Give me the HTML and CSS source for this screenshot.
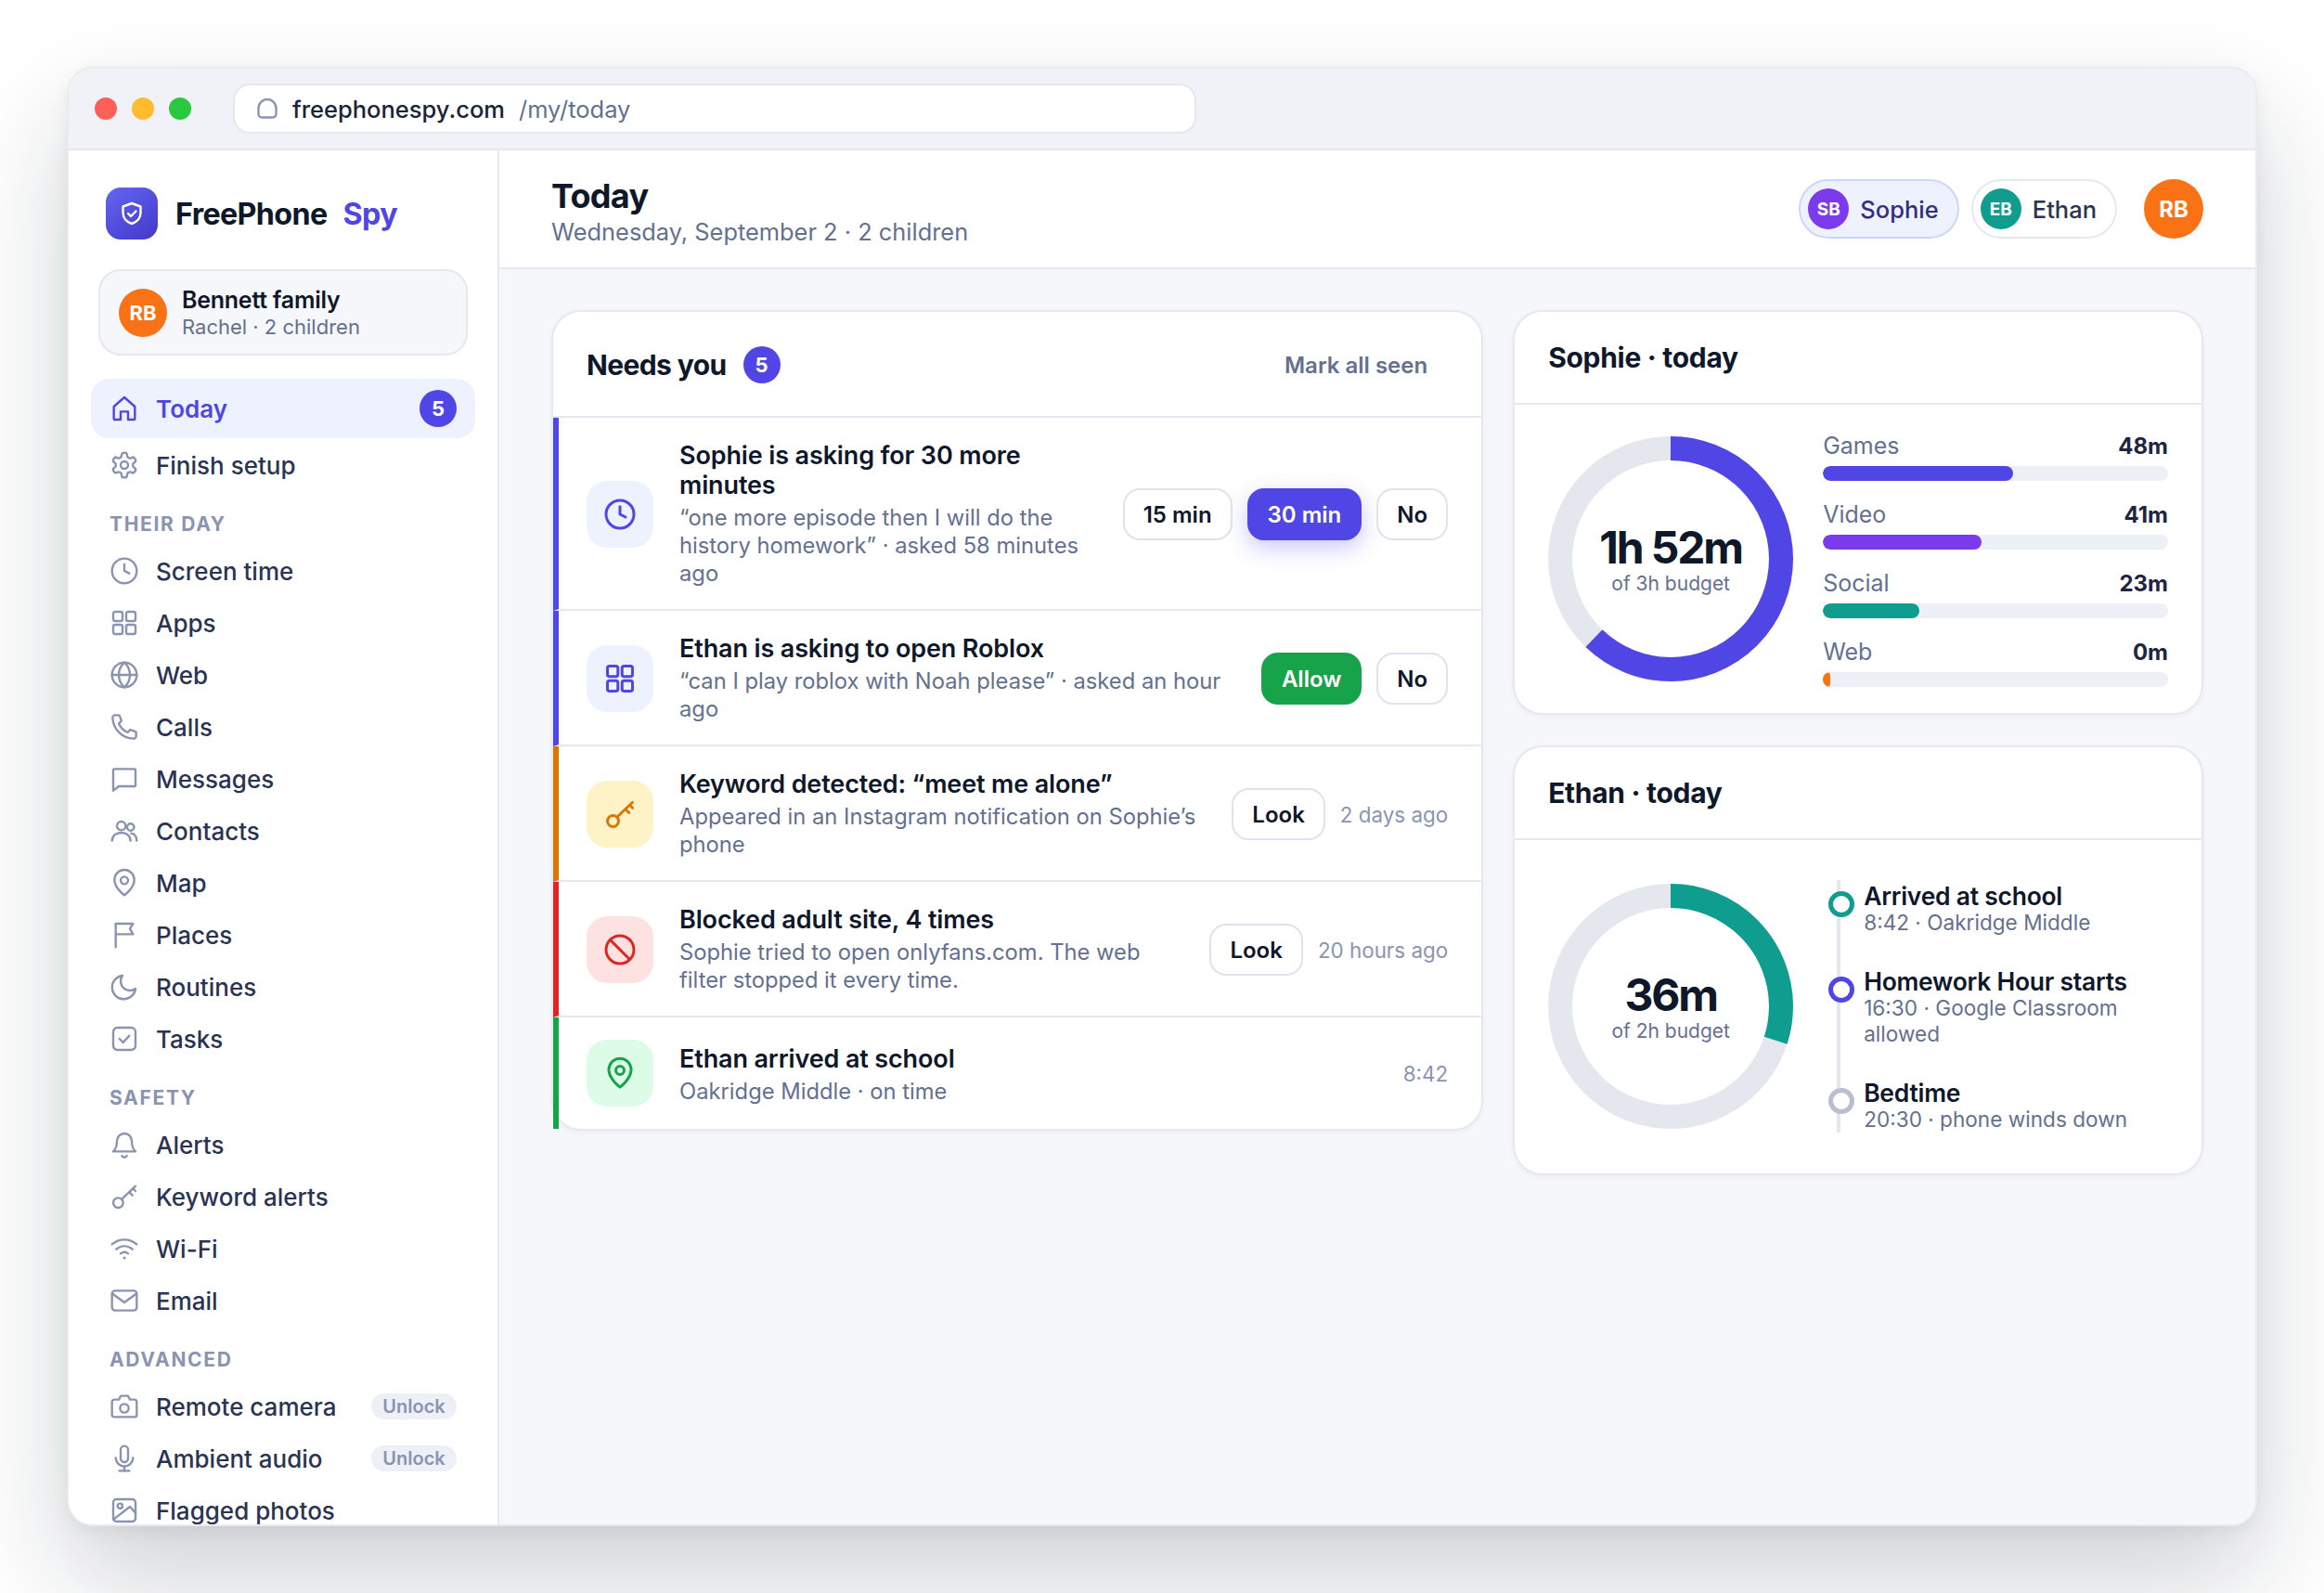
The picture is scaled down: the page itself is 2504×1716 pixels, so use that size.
FILE: index.html
```html
<!DOCTYPE html>
<html lang="en">
<head>
<meta charset="utf-8">
<title>FreePhone Spy</title>
<link rel="stylesheet" href="styles.css">
</head>
<body>
<svg class="sprite" xmlns="http://www.w3.org/2000/svg">
  <symbol id="i-home" viewBox="0 0 24 24"><path d="M3.500 10.500 12 3l8.500 7.500V20a1 1 0 0 1-1 1H15v-6.500H9V21H4.500a1 1 0 0 1-1-1z"/></symbol>
  <symbol id="i-gear" viewBox="0 0 24 24"><path d="M12.220 2h-.44a2 2 0 0 0-2 2v.18a2 2 0 0 1-1 1.730l-.43.25a2 2 0 0 1-2 0l-.15-.08a2 2 0 0 0-2.730.73l-.22.38a2 2 0 0 0 .73 2.730l.15.1a2 2 0 0 1 1 1.720v.51a2 2 0 0 1-1 1.740l-.15.09a2 2 0 0 0-.73 2.730l.22.38a2 2 0 0 0 2.730.73l.15-.08a2 2 0 0 1 2 0l.43.25a2 2 0 0 1 1 1.730V20a2 2 0 0 0 2 2h.44a2 2 0 0 0 2-2v-.18a2 2 0 0 1 1-1.730l.43-.25a2 2 0 0 1 2 0l.15.08a2 2 0 0 0 2.730-.73l.22-.39a2 2 0 0 0-.73-2.730l-.15-.08a2 2 0 0 1-1-1.740v-.5a2 2 0 0 1 1-1.740l.15-.09a2 2 0 0 0 .73-2.730l-.22-.38a2 2 0 0 0-2.730-.73l-.15.08a2 2 0 0 1-2 0l-.43-.25a2 2 0 0 1-1-1.730V4a2 2 0 0 0-2-2z"/><circle cx="12" cy="12" r="3"/></symbol>
  <symbol id="i-clock" viewBox="0 0 24 24"><circle cx="12" cy="12" r="10"/><path d="M12 6.500V12l4 2"/></symbol>
  <symbol id="i-apps" viewBox="0 0 24 24"><rect x="3" y="3" width="7.500" height="7.500" rx="1.500"/><rect x="13.500" y="3" width="7.500" height="7.500" rx="1.500"/><rect x="3" y="13.500" width="7.500" height="7.500" rx="1.500"/><rect x="13.500" y="13.500" width="7.500" height="7.500" rx="1.500"/></symbol>
  <symbol id="i-globe" viewBox="0 0 24 24"><circle cx="12" cy="12" r="10"/><path d="M2 12h20"/><path d="M12 2c3 2.700 4.500 6 4.500 10s-1.500 7.300-4.500 10c-3-2.700-4.500-6-4.500-10S9 4.700 12 2z"/></symbol>
  <symbol id="i-phone" viewBox="0 0 24 24"><path d="M4.500 2.500h2.800a1 1 0 0 1 1 .7l1.200 3.500a1 1 0 0 1-.3 1.100L7.500 9.300a14 14 0 0 0 7.200 7.200l1.500-1.700a1 1 0 0 1 1.100-.3l3.500 1.200a1 1 0 0 1 .7 1v2.800a2 2 0 0 1-2.200 2A17.500 17.500 0 0 1 2.500 4.700a2 2 0 0 1 2-2.200z"/></symbol>
  <symbol id="i-chat" viewBox="0 0 24 24"><path d="M3 5a1 1 0 0 1 1-1h16a1 1 0 0 1 1 1v12a1 1 0 0 1-1 1H7.500L3 21.500z"/></symbol>
  <symbol id="i-users" viewBox="0 0 24 24"><circle cx="9.500" cy="8" r="3.500"/><circle cx="17" cy="9" r="2.800"/><path d="M2 20c.3-4.200 3.300-6.500 7.500-6.500S16.700 15.800 17 20"/><path d="M17.500 14c2.600.3 4.300 2.500 4.500 6"/></symbol>
  <symbol id="i-pin" viewBox="0 0 24 24"><path d="M12 22s-8-5.800-8-12.500a8 8 0 0 1 16 0C20 16.200 12 22 12 22z"/><circle cx="12" cy="10" r="3"/></symbol>
  <symbol id="i-flag" viewBox="0 0 24 24"><path d="M5 22V3h14l-2.500 4 2.500 4.500H5"/></symbol>
  <symbol id="i-moon" viewBox="0 0 24 24"><path d="M21 13.500A9.500 9.500 0 1 1 10.500 3 7.500 7.500 0 0 0 21 13.500z"/></symbol>
  <symbol id="i-check" viewBox="0 0 24 24"><rect x="3" y="3" width="18" height="18" rx="3.500"/><path d="m8 12 3 3 5-5.500"/></symbol>
  <symbol id="i-bell" viewBox="0 0 24 24"><path d="M6 9a6 6 0 0 1 12 0c0 5.500 1.500 7 3 8.500H3C4.500 16 6 14.500 6 9z"/><path d="M10 21a2.200 2.200 0 0 0 4 0"/></symbol>
  <symbol id="i-key" viewBox="0 0 24 24"><circle cx="7" cy="17" r="4"/><path d="M10 14 21 3.500"/><path d="m16 8.500 2.500 2.500"/><path d="m19 5.500 2 2"/></symbol>
  <symbol id="i-wifi" viewBox="0 0 24 24"><path d="M2 8.500c6-5 14-5 20 0"/><path d="M5.500 12.500c4-3.300 9-3.300 13 0"/><path d="M9 16c1.800-1.400 4.200-1.400 6 0"/><circle class="solid" cx="12" cy="19.500" r="1.200"/></symbol>
  <symbol id="i-mail" viewBox="0 0 24 24"><rect x="2" y="4" width="20" height="16" rx="2.500"/><path d="m2.500 6.500 9.500 7 9.500-7"/></symbol>
  <symbol id="i-camera" viewBox="0 0 24 24"><path d="M4 6.500h3.500L9 3.500h6l1.500 3H20a2 2 0 0 1 2 2V19a1.500 1.500 0 0 1-1.500 1.500h-17A1.500 1.500 0 0 1 2 19V8.500a2 2 0 0 1 2-2z"/><circle cx="12" cy="13.500" r="3.500"/></symbol>
  <symbol id="i-mic" viewBox="0 0 24 24"><rect x="9" y="2" width="6" height="13" rx="3"/><path d="M5 11.500a7 7 0 0 0 14 0"/><path d="M12 18.500V22"/><path d="M8 22h8"/></symbol>
  <symbol id="i-photo" viewBox="0 0 24 24"><rect x="3" y="3" width="18" height="18" rx="2.500"/><circle cx="8.500" cy="8.500" r="2"/><path d="m3.500 19 13-10 4.500 5"/></symbol>
  <symbol id="i-block" viewBox="0 0 24 24"><circle cx="12" cy="12" r="10"/><path d="m5 5 14 14"/></symbol>
</svg>

<div class="window">
  <header class="titlebar">
    <span class="dot dot-red"></span><span class="dot dot-yellow"></span><span class="dot dot-green"></span>
    <div class="urlbar">
      <svg class="url-glyph" viewBox="0 0 22 22"><path d="M1.500 10.500a9.500 9.500 0 0 1 19 0V17a3.500 3.500 0 0 1-3.500 3.500H5A3.500 3.500 0 0 1 1.500 17z"/></svg>
      <span class="url-host">freephonespy.com</span>
      <span class="url-path">/my/today</span>
    </div>
  </header>
  <div class="app">
    <aside class="sidebar">
      <div class="brand">
        <span class="brand-mark">
          <svg viewBox="0 0 24 26"><path d="M12 2 21.500 5.500V12c0 6-4 10-9.500 12C6.500 22 2.500 18 2.500 12V5.500z"/><path d="m8 13 3 3 5.500-5.500"/></svg>
        </span>
        <span class="brand-name">FreePhone</span><span class="brand-accent">Spy</span>
      </div>
      <div class="family">
        <span class="avatar avatar-orange avatar-52">RB</span>
        <div>
          <div class="family-name">Bennett family</div>
          <div class="family-sub">Rachel · 2 children</div>
        </div>
      </div>
      <nav class="nav">
        <a class="nav-item nav-active"><svg class="ico"><use href="#i-home"/></svg><span class="nav-text">Today</span><span class="count">5</span></a>
        <a class="nav-item"><svg class="ico"><use href="#i-gear"/></svg><span class="nav-text">Finish setup</span></a>
        <div class="nav-label">THEIR DAY</div>
        <a class="nav-item"><svg class="ico"><use href="#i-clock"/></svg><span class="nav-text">Screen time</span></a>
        <a class="nav-item"><svg class="ico"><use href="#i-apps"/></svg><span class="nav-text">Apps</span></a>
        <a class="nav-item"><svg class="ico"><use href="#i-globe"/></svg><span class="nav-text">Web</span></a>
        <a class="nav-item"><svg class="ico"><use href="#i-phone"/></svg><span class="nav-text">Calls</span></a>
        <a class="nav-item"><svg class="ico"><use href="#i-chat"/></svg><span class="nav-text">Messages</span></a>
        <a class="nav-item"><svg class="ico"><use href="#i-users"/></svg><span class="nav-text">Contacts</span></a>
        <a class="nav-item"><svg class="ico"><use href="#i-pin"/></svg><span class="nav-text">Map</span></a>
        <a class="nav-item"><svg class="ico"><use href="#i-flag"/></svg><span class="nav-text">Places</span></a>
        <a class="nav-item"><svg class="ico"><use href="#i-moon"/></svg><span class="nav-text">Routines</span></a>
        <a class="nav-item"><svg class="ico"><use href="#i-check"/></svg><span class="nav-text">Tasks</span></a>
        <div class="nav-label">SAFETY</div>
        <a class="nav-item"><svg class="ico"><use href="#i-bell"/></svg><span class="nav-text">Alerts</span></a>
        <a class="nav-item"><svg class="ico"><use href="#i-key"/></svg><span class="nav-text">Keyword alerts</span></a>
        <a class="nav-item"><svg class="ico"><use href="#i-wifi"/></svg><span class="nav-text">Wi-Fi</span></a>
        <a class="nav-item"><svg class="ico"><use href="#i-mail"/></svg><span class="nav-text">Email</span></a>
        <div class="nav-label">ADVANCED</div>
        <a class="nav-item"><svg class="ico"><use href="#i-camera"/></svg><span class="nav-text">Remote camera</span><span class="unlock">Unlock</span></a>
        <a class="nav-item"><svg class="ico"><use href="#i-mic"/></svg><span class="nav-text">Ambient audio</span><span class="unlock">Unlock</span></a>
        <a class="nav-item"><svg class="ico"><use href="#i-photo"/></svg><span class="nav-text">Flagged photos</span></a>
      </nav>
    </aside>
    <main class="main">
      <header class="topbar">
        <div>
          <h1 class="page-title">Today</h1>
          <div class="page-sub">Wednesday, September 2 · 2 children</div>
        </div>
        <div class="topbar-right">
          <span class="child child-on"><span class="avatar avatar-violet avatar-44">SB</span>Sophie</span>
          <span class="child"><span class="avatar avatar-teal avatar-44">EB</span>Ethan</span>
          <span class="avatar avatar-orange avatar-64">RB</span>
        </div>
      </header>
      <div class="content">
        <section class="card">
          <div class="needs-head">
            <h2 class="card-title">Needs you</h2>
            <span class="count count-lg">5</span>
            <span class="mark">Mark all seen</span>
          </div>
          <div class="row row-indigo">
            <span class="tile tile-indigo"><svg class="tile-ico"><use href="#i-clock"/></svg></span>
            <div class="row-text">
              <div class="row-title">Sophie is asking for 30 more minutes</div>
              <div class="row-sub">“one more episode then I will do the history homework” · asked 58 minutes ago</div>
            </div>
            <div class="actions">
              <span class="btn">15 min</span><span class="btn btn-primary">30 min</span><span class="btn">No</span>
            </div>
          </div>
          <div class="row row-indigo">
            <span class="tile tile-indigo"><svg class="tile-ico"><use href="#i-apps"/></svg></span>
            <div class="row-text">
              <div class="row-title">Ethan is asking to open Roblox</div>
              <div class="row-sub">“can I play roblox with Noah please” · asked an hour ago</div>
            </div>
            <div class="actions">
              <span class="btn btn-green">Allow</span><span class="btn">No</span>
            </div>
          </div>
          <div class="row row-amber">
            <span class="tile tile-amber"><svg class="tile-ico"><use href="#i-key"/></svg></span>
            <div class="row-text">
              <div class="row-title">Keyword detected: “meet me alone”</div>
              <div class="row-sub">Appeared in an Instagram notification on Sophie’s phone</div>
            </div>
            <div class="actions">
              <span class="btn">Look</span><span class="time">2 days ago</span>
            </div>
          </div>
          <div class="row row-red">
            <span class="tile tile-red"><svg class="tile-ico"><use href="#i-block"/></svg></span>
            <div class="row-text">
              <div class="row-title">Blocked adult site, 4 times</div>
              <div class="row-sub">Sophie tried to open onlyfans.com. The web filter stopped it every time.</div>
            </div>
            <div class="actions">
              <span class="btn">Look</span><span class="time">20 hours ago</span>
            </div>
          </div>
          <div class="row row-green row-last">
            <span class="tile tile-green"><svg class="tile-ico"><use href="#i-pin"/></svg></span>
            <div class="row-text">
              <div class="row-title">Ethan arrived at school</div>
              <div class="row-sub">Oakridge Middle · on time</div>
            </div>
            <span class="time">8:42</span>
          </div>
        </section>
        <div class="side">
          <section class="card">
            <h2 class="side-head">Sophie · today</h2>
            <div class="side-body side-body-bars">
              <div class="donut">
                <svg viewBox="0 0 264 264"><circle class="ring-track" cx="132" cy="132" r="119"/><circle class="ring-indigo" cx="132" cy="132" r="119" pathLength="100" stroke-dasharray="62.2 100"/></svg>
                <div class="donut-text"><div class="donut-val">1h 52m</div><div class="donut-sub">of 3h budget</div></div>
              </div>
              <div class="bars">
                <div class="bar"><div class="bar-top"><span class="bar-name">Games</span><span class="bar-val">48m</span></div><div class="track"><div class="fill fill-indigo" style="width:55%"></div></div></div>
                <div class="bar"><div class="bar-top"><span class="bar-name">Video</span><span class="bar-val">41m</span></div><div class="track"><div class="fill fill-violet" style="width:46%"></div></div></div>
                <div class="bar"><div class="bar-top"><span class="bar-name">Social</span><span class="bar-val">23m</span></div><div class="track"><div class="fill fill-teal" style="width:28%"></div></div></div>
                <div class="bar"><div class="bar-top"><span class="bar-name">Web</span><span class="bar-val">0m</span></div><div class="track"><div class="fill fill-orange" style="width:2%"></div></div></div>
              </div>
            </div>
          </section>
          <section class="card">
            <h2 class="side-head">Ethan · today</h2>
            <div class="side-body side-body-tall">
              <div class="donut">
                <svg viewBox="0 0 264 264"><circle class="ring-track" cx="132" cy="132" r="119"/><circle class="ring-teal" cx="132" cy="132" r="119" pathLength="100" stroke-dasharray="30 100"/></svg>
                <div class="donut-text"><div class="donut-val">36m</div><div class="donut-sub">of 2h budget</div></div>
              </div>
              <div class="timeline">
                <div class="tl-item"><span class="tl-dot tl-teal"></span><div class="tl-title">Arrived at school</div><div class="tl-sub">8:42 · Oakridge Middle</div></div>
                <div class="tl-item"><span class="tl-dot tl-indigo"></span><div class="tl-title">Homework Hour starts</div><div class="tl-sub">16:30 · Google Classroom allowed</div></div>
                <div class="tl-item"><span class="tl-dot tl-grey"></span><div class="tl-title">Bedtime</div><div class="tl-sub">20:30 · phone winds down</div></div>
              </div>
            </div>
          </section>
        </div>
      </div>
    </main>
  </div>
</div>
</body>
</html>
```
FILE: styles.css
```css
* { box-sizing: border-box; }
html, body { margin: 0; height: 100%; }
body {
  background: #fff;
  font-family: Inter, "Liberation Sans", sans-serif;
  color: #0f172a;
  padding: 72px;
  height: 1716px;
  overflow: hidden;
}
h1, h2 { margin: 0; }
.sprite { width: 0; height: 0; position: absolute; }

.window {
  width: 2360px;
  height: 1572px;
  display: flex;
  flex-direction: column;
  background: #fff;
  border: 2px solid #e9ebf1;
  border-radius: 28px;
  overflow: hidden;
  box-shadow: 0 56px 120px rgba(15, 23, 42, .2), 0 6px 20px rgba(15, 23, 42, .06);
}
.titlebar {
  height: 88px;
  flex: none;
  display: flex;
  align-items: center;
  gap: 16px;
  padding: 0 28px;
  background: #f1f2f7;
  border-bottom: 2px solid #e6e8f0;
}
.dot { width: 24px; height: 24px; border-radius: 50%; }
.dot-red { background: #ff5f57; }
.dot-yellow { background: #febc2e; }
.dot-green { background: #28c840; }
.urlbar {
  width: 1038px;
  height: 54px;
  margin-left: 29px;
  display: flex;
  align-items: center;
  padding: 0 24px;
  background: #fff;
  border: 2px solid #e6e8f0;
  border-radius: 18px;
  font-size: 25.5px;
  font-weight: 500;
}
.url-glyph { width: 22px; height: 22px; margin-right: 16px; fill: none; stroke: #8a94b0; stroke-width: 2.4; }
.url-host { color: #1b2338; }
.url-path { margin-left: 15px; color: #64708f; font-weight: 400; }

.app { flex: 1; min-height: 0; display: flex; }
.sidebar {
  width: 464px;
  flex: none;
  padding: 40px 24px 0;
  border-right: 2px solid #e6e8f0;
  overflow: hidden;
}
.brand { display: flex; align-items: center; margin-left: 16px; height: 56px; }
.brand-mark {
  width: 56px; height: 56px;
  margin-right: 19px;
  border-radius: 16px;
  background: linear-gradient(145deg, #6366f1, #4338ca);
  display: flex; align-items: center; justify-content: center;
}
.brand-mark svg { width: 24px; height: 26px; fill: none; stroke: #fff; stroke-width: 2.4; stroke-linejoin: round; stroke-linecap: round; }
.brand-name { font-size: 32.3px; font-weight: 700; letter-spacing: -.02em; }
.brand-accent { font-size: 32.3px; font-weight: 700; letter-spacing: -.02em; color: #4f46e5; margin-left: 17px; }

.avatar {
  flex: none;
  border-radius: 50%;
  color: #fff;
  display: inline-flex; align-items: center; justify-content: center;
  font-weight: 700;
}
.avatar-52 { width: 52px; height: 52px; font-size: 22px; }
.avatar-44 { width: 44px; height: 44px; font-size: 19px; }
.avatar-64 { width: 64px; height: 64px; font-size: 24px; }
.avatar-orange { background: #f97316; }
.avatar-violet { background: #7c3aed; }
.avatar-teal { background: #0f9d90; }

.family {
  margin: 32px 8px 25px;
  height: 93px;
  display: flex;
  align-items: center;
  gap: 16px;
  padding: 0 20px;
  background: #f6f7fb;
  border: 2px solid #e6e8f0;
  border-radius: 24px;
}
.family-name { font-size: 25px; font-weight: 600; line-height: 30px; letter-spacing: -.01em; }
.family-sub { font-size: 22px; line-height: 28px; color: #64708f; }

.nav { display: flex; flex-direction: column; }
.nav-item {
  height: 56px;
  flex: none;
  display: flex;
  align-items: center;
  gap: 18px;
  padding: 0 20px;
  font-size: 26px;
  font-weight: 500;
  color: #2a3352;
  border-radius: 20px;
}
.nav-active {
  height: 64px;
  margin-bottom: 1px;
  color: #4f46e5;
  font-weight: 600;
  background: #eef2ff;
}
.nav-active .ico { color: #4f46e5; }
.nav-text { flex: 1; }
.ico {
  width: 32px; height: 32px;
  flex: none;
  color: #8a94b0;
  fill: none;
  stroke: currentColor;
  stroke-width: 1.8;
  stroke-linecap: round;
  stroke-linejoin: round;
}
.solid { fill: currentColor; stroke: none; }
.count {
  width: 40px; height: 40px;
  border-radius: 50%;
  background: #4f46e5;
  color: #fff;
  font-size: 22px;
  font-weight: 700;
  display: inline-flex; align-items: center; justify-content: center;
}
.count-lg { margin-left: 18px; }
.nav-label {
  margin: 22px 0 8px;
  padding-left: 20px;
  font-size: 21px;
  line-height: 28px;
  font-weight: 700;
  letter-spacing: .08em;
  color: #8a94b0;
}
.unlock {
  width: 92px; height: 28px;
  border-radius: 14px;
  background: #eef0f7;
  color: #8a94b0;
  font-size: 20px;
  font-weight: 600;
  display: flex; align-items: center; justify-content: center;
}

.main { flex: 1; min-width: 0; background: #f6f7fb; display: flex; flex-direction: column; }
.topbar {
  height: 128px;
  flex: none;
  display: flex;
  align-items: center;
  justify-content: space-between;
  padding: 0 56px;
  background: #fff;
  border-bottom: 2px solid #e6e8f0;
}
.page-title { font-size: 36px; line-height: 42px; font-weight: 700; letter-spacing: -.02em; margin-top: 6px; }
.page-sub { font-size: 25.4px; line-height: 32px; margin-top: 2px; color: #64708f; }
.topbar-right { display: flex; align-items: center; gap: 13px; }
.child {
  height: 64px;
  display: inline-flex;
  align-items: center;
  gap: 12px;
  padding: 0 20px 0 8px;
  border: 2px solid #e6e8f0;
  border-radius: 32px;
  background: #fff;
  font-size: 25.5px;
  font-weight: 500;
  color: #2a3352;
}
.child-on { background: #eef2ff; border-color: #cdd5fb; color: #312e81; }
.topbar-right .avatar-64 { margin-left: 16px; }

.content {
  flex: 1;
  display: grid;
  grid-template-columns: 1.35fr 1fr;
  gap: 32px;
  align-items: start;
  padding: 44px 56px 0;
}
.card {
  background: #fff;
  border: 2px solid #e6e8f0;
  border-radius: 32px;
  box-shadow: 0 2px 6px rgba(15, 23, 42, .04);
}
.side { display: flex; flex-direction: column; gap: 33px; }
.needs-head {
  height: 114px;
  display: flex;
  align-items: center;
  padding: 2px 36px 0;
  border-bottom: 2px solid #e6e8f0;
}
.card-title { font-size: 30px; font-weight: 700; letter-spacing: -.02em; }
.mark { margin-left: auto; margin-right: 22px; font-size: 24px; font-weight: 600; color: #64708f; }

.row {
  display: flex;
  align-items: center;
  gap: 28px;
  padding: 25px 36px 23px 30px;
  border-left: 6px solid;
  border-bottom: 2px solid #e6e8f0;
}
.row-last { border-bottom-width: 0; padding: 24px 36px 24px 30px; }
.row-last .row-text { padding-top: 4px; }
.row-indigo { border-left-color: #4f46e5; }
.row-amber { border-left-color: #d97706; }
.row-red { border-left-color: #dc2626; }
.row-green { border-left-color: #16a34a; }
.tile {
  width: 72px; height: 72px;
  flex: none;
  border-radius: 22px;
  display: flex; align-items: center; justify-content: center;
}
.tile-indigo { background: #eef2ff; color: #4f46e5; }
.tile-amber { background: #fef3c7; color: #d97706; }
.tile-red { background: #fee2e2; color: #dc2626; }
.tile-green { background: #dcfce7; color: #16a34a; }
.tile-ico {
  width: 36px; height: 36px;
  fill: none;
  stroke: currentColor;
  stroke-width: 2;
  stroke-linecap: round;
  stroke-linejoin: round;
}
.row-text { flex: 1; min-width: 0; }
.row-title { font-size: 27px; line-height: 32px; font-weight: 600; letter-spacing: -.005em; }
.row-sub { margin-top: 4px; font-size: 23.75px; line-height: 30px; color: #64708f; }
.actions { display: flex; align-items: center; gap: 16px; flex: none; }
.btn {
  height: 56px;
  padding: 0 20px;
  display: inline-flex; align-items: center;
  border: 2px solid #dfe3ef;
  border-radius: 18px;
  background: #fff;
  font-size: 24px;
  font-weight: 600;
  color: #0f172a;
}
.btn-primary { background: #4f46e5; border-color: #4f46e5; color: #fff; box-shadow: 0 8px 24px rgba(79, 70, 229, .3); }
.btn-green { background: #16a34a; border-color: #16a34a; color: #fff; }
.time { font-size: 22.4px; color: #8a94b0; white-space: nowrap; }

.side-head {
  height: 100px;
  padding: 0 36px;
  display: flex; align-items: center;
  font-size: 30px;
  font-weight: 700;
  letter-spacing: -.01em;
  border-bottom: 2px solid #e6e8f0;
}
.side-body { display: flex; align-items: center; gap: 32px; padding: 32px 36px; }
.side-body-bars { align-items: flex-start; padding: 33px 36px 28px; }
.side-body-bars .donut { margin-top: 1px; }
.side-body-tall { padding: 43px 36px 44px; }
.donut { width: 264px; height: 264px; flex: none; position: relative; }
.donut svg { width: 264px; height: 264px; display: block; transform: rotate(-90deg); fill: none; stroke-width: 26; }
.ring-track { stroke: #e5e7ef; }
.ring-indigo { stroke: #4f46e5; }
.ring-teal { stroke: #0f9d90; }
.donut-text { position: absolute; inset: 2px 0 0; display: flex; flex-direction: column; align-items: center; justify-content: center; }
.donut-val { font-size: 48px; line-height: 52px; font-weight: 700; letter-spacing: -.045em; }
.donut-sub { font-size: 21px; line-height: 26px; color: #64708f; }

.bars { flex: 1; display: flex; flex-direction: column; gap: 25px; }
.bar-top { display: flex; justify-content: space-between; align-items: center; height: 22px; margin-bottom: 11px; }
.bar-name { font-size: 25px; color: #64708f; }
.bar-val { font-size: 24px; font-weight: 700; color: #1e2540; }
.track { height: 16px; border-radius: 8px; background: #eef0f7; overflow: hidden; }
.fill { height: 100%; border-radius: 8px; }
.fill-indigo { background: #4f46e5; }
.fill-violet { background: #7c3aed; }
.fill-teal { background: #0f9d90; }
.fill-orange { background: #f97316; }

.timeline { flex: 1; position: relative; display: flex; flex-direction: column; gap: 34px; padding-top: 2px; padding-left: 44px; }
.timeline::before { content: ""; position: absolute; left: 15px; top: 0; bottom: 0; width: 4px; background: #e5e7ef; }
.tl-item { position: relative; }
.tl-dot { position: absolute; left: -38px; top: 10px; width: 28px; height: 28px; border-radius: 50%; background: #fff; border: 5px solid; }
.tl-teal { border-color: #0f9d90; }
.tl-indigo { border-color: #4f46e5; }
.tl-grey { border-color: #b9bfd0; }
.tl-title { font-size: 26.500px; line-height: 30px; font-weight: 600; letter-spacing: -.01em; }
.tl-sub { font-size: 22.600px; line-height: 28px; color: #64708f; }
```
